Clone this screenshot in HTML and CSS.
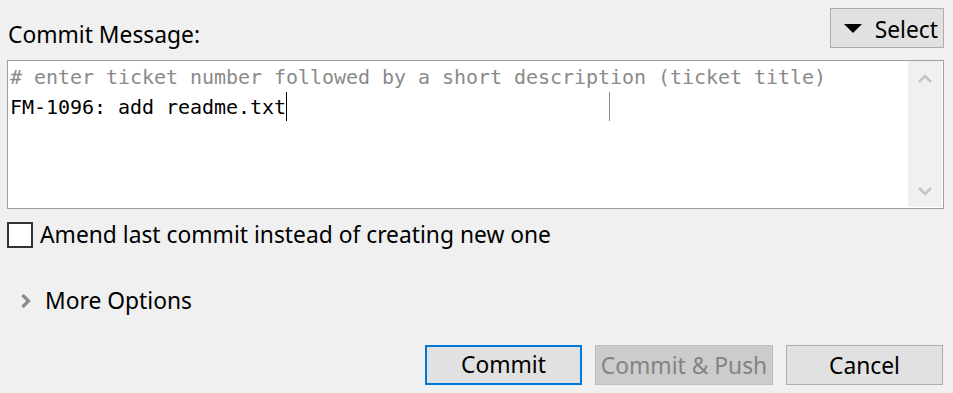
FILE: index.html
```html
<!DOCTYPE html>
<html>
<head>
<meta charset="utf-8">
<link rel="stylesheet" href="styles.css">
</head>
<body>
<div class="dialog">
  <div class="header">
    <div class="label">Commit Message:</div>
    <button class="btn select-btn"><span class="tri"></span>Select</button>
  </div>
  <div class="editor">
    <div class="text">
      <div class="line hint"># enter ticket number followed by a short description (ticket title)</div>
      <div class="line">FM-1096: add readme.txt<span class="caret"></span></div>
      <div class="margin-guide"></div>
    </div>
    <div class="scrollbar">
      <svg class="chev" width="14" height="10" viewBox="0 0 14 10"><path d="M1 8 L7 2 L13 8" fill="none" stroke="#c4c4c4" stroke-width="2.6"/></svg>
      <svg class="chev" width="14" height="10" viewBox="0 0 14 10"><path d="M1 2 L7 8 L13 2" fill="none" stroke="#c4c4c4" stroke-width="2.6"/></svg>
    </div>
  </div>
  <label class="check-row"><span class="box"></span>Amend last commit instead of creating new one</label>
  <div class="more">
    <svg class="more-chev" width="12" height="16" viewBox="0 0 12 16"><path d="M2.5 2 L8.5 8 L2.5 14" fill="none" stroke="#8a8a8a" stroke-width="3.2"/></svg>
    <span>More Options</span>
  </div>
  <div class="actions">
    <button class="btn btn-primary">Commit</button>
    <button class="btn btn-disabled">Commit &amp; Push</button>
    <button class="btn btn-cancel">Cancel</button>
  </div>
</div>
</body>
</html>
```
FILE: styles.css
```css
* { box-sizing: border-box; }
html, body {
  margin: 0;
  padding: 0;
  background: #f0f0f0;
  width: 953px;
  height: 393px;
  overflow: hidden;
}
body {
  font-family: "Noto Sans", "Open Sans", sans-serif;
  font-size: 22.8px;
  color: #000;
}
.dialog {
  padding: 8px 9px 0 7px;
}
.header {
  display: flex;
  justify-content: space-between;
  align-items: flex-end;
  height: 40px;
}
.label {
  padding-left: 1px;
  line-height: 28px;
  margin-bottom: -1px;
}
.btn {
  font-family: "Noto Sans", "Open Sans", sans-serif;
  font-size: 22.8px;
  background: #e1e1e1;
  border: 1px solid #adadad;
  color: #000;
  padding: 2px 0 0;
  height: 40px;
  line-height: 36px;
  margin: 0;
}
.select-btn {
  width: 114px;
  display: flex;
  align-items: center;
  justify-content: flex-end;
  padding: 3px 5px 0 0;
  gap: 13px;
  align-self: flex-start;
}
.tri {
  width: 0;
  height: 0;
  margin-top: -2px;
  border-left: 9px solid transparent;
  border-right: 9px solid transparent;
  border-top: 9px solid #000;
}
.editor {
  margin-top: 12px;
  height: 149px;
  border: 1px solid #a0a0a0;
  background: #fff;
  display: flex;
}
.text {
  flex: 1;
  position: relative;
  padding: 1px 0 0 2px;
  font-family: "DejaVu Sans Mono", "Liberation Mono", monospace;
  font-size: 20px;
  line-height: 30px;
  letter-spacing: -0.04px;
}
.line { white-space: pre; height: 30px; }
.hint { color: #8a8a8a; }
.caret {
  display: inline-block;
  width: 0;
  height: 29px;
  border-left: 1px solid #000;
  vertical-align: -7px;
}
.margin-guide {
  position: absolute;
  left: 601px;
  top: 31px;
  width: 1px;
  height: 29px;
  background: #8a8a8a;
}
.scrollbar {
  width: 34px;
  margin: 0 1px 1px 0;
  background: #f0f0f0;
  display: flex;
  flex-direction: column;
  justify-content: space-between;
  align-items: center;
  padding: 13px 0 11px;
}
.chev { display: block; }
.check-row {
  display: flex;
  align-items: center;
  gap: 7px;
  margin-top: 13px;
  height: 26px;
  line-height: 26px;
}
.box {
  flex: none;
  width: 26px;
  height: 26px;
  border: 2px solid #333;
  background: #fff;
}
.more {
  display: flex;
  align-items: center;
  margin-top: 40px;
  padding-left: 13px;
  gap: 13px;
  height: 26px;
  line-height: 26px;
}
.more-chev { display: block; }
.actions {
  display: flex;
  justify-content: flex-end;
  gap: 13px;
  margin-top: 31px;
  margin-right: 1px;
}
.actions .btn {
  width: 157px;
  text-align: center;
}
.btn-primary {
  border: 2px solid #0078d7;
  padding-top: 0;
}
.actions .btn-disabled {
  width: 178px;
  background: #cccccc;
  border-color: #bfbfbf;
  color: #838383;
}
```
